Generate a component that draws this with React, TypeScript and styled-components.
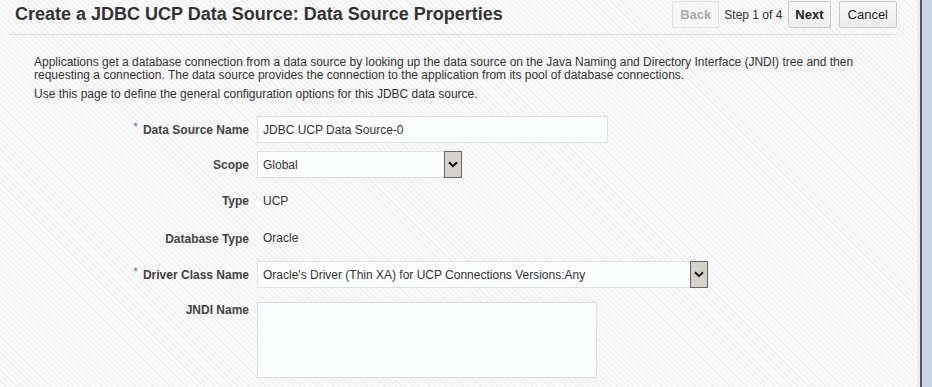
import styled, { createGlobalStyle } from 'styled-components';

const GlobalStyle = createGlobalStyle`
  html, body {
    margin: 0;
    padding: 0;
    background: #c9d5e3;
  }
  body {
    font-family: 'Liberation Sans', Arial, sans-serif;
  }
`;

function Chevron() {
  return (
    <svg width="10" height="7" viewBox="0 0 10 7">
      <path d="M1 1.2 L5 5.2 L9 1.2" fill="none" stroke="#111" strokeWidth="2" />
    </svg>
  );
}

function Select({ value, width }: { value: string; width: number }) {
  return (
    <S.SelectBox style={{ width }}>
      <S.SelectValue>{value}</S.SelectValue>
      <S.DropButton>
        <Chevron />
      </S.DropButton>
    </S.SelectBox>
  );
}

function Label({ text, required }: { text: string; required?: boolean }) {
  return (
    <S.Label>
      {required && <S.Required>*</S.Required>}
      {text}
    </S.Label>
  );
}

export default function App() {
  return (
    <>
      <GlobalStyle />
      <S.Page>
        <S.Main>
          <S.Header>
            <S.Title>Create a JDBC UCP Data Source: Data Source Properties</S.Title>
            <S.Actions>
              <S.Button $disabled $bold $pad={7}>
                Back
              </S.Button>
              <S.Step>Step 1 of 4</S.Step>
              <S.Button $bold $pad={6}>
                Next
              </S.Button>
              <S.Button $pad={8} $gap={8}>
                Cancel
              </S.Button>
            </S.Actions>
          </S.Header>

          <S.Intro>
            <S.Para>
              Applications get a database connection from a data source by looking up the data source on the
              Java Naming and Directory Interface (JNDI) tree and then requesting a connection. The data source
              provides the connection to the application from its pool of database connections.
            </S.Para>
            <S.Para>Use this page to define the general configuration options for this JDBC data source.</S.Para>
          </S.Intro>

          <S.Form>
            <S.Row>
              <Label text="Data Source Name" required />
              <S.TextInput defaultValue="JDBC UCP Data Source-0" />
            </S.Row>
            <S.Row>
              <Label text="Scope" />
              <Select value="Global" width={205} />
            </S.Row>
            <S.Row $h={29}>
              <Label text="Type" />
              <S.Value>UCP</S.Value>
            </S.Row>
            <S.Row $h={30}>
              <Label text="Database Type" />
              <S.Value>Oracle</S.Value>
            </S.Row>
            <S.Row>
              <Label text="Driver Class Name" required />
              <Select value="Oracle's Driver (Thin XA) for UCP Connections Versions:Any" width={451} />
            </S.Row>
            <S.Row $top $mt={6}>
              <Label text="JNDI Name" />
              <S.TextArea />
            </S.Row>
          </S.Form>
        </S.Main>
        <S.Edge />
      </S.Page>
    </>
  );
}

const S = {
  Page: styled.div`
    display: flex;
    width: 932px;
    height: 387px;
    overflow: hidden;
  `,
  Main: styled.div`
    flex: 1;
    padding: 0 20px 0 9px;
    background-color: #f8f8f8;
    background-image: repeating-linear-gradient(45deg, #efefef 0 1px, #f9f9f9 1px 4px);
    border-right: 3px solid #ececec;
  `,
  Edge: styled.div`
    width: 10px;
    border-left: 2px solid #56585a;
    background: #c9d5e3;
  `,
  Header: styled.div`
    display: flex;
    justify-content: space-between;
    align-items: flex-start;
    height: 34px;
    border-bottom: 1px solid #d9dfe5;
  `,
  Title: styled.h1`
    margin: 0;
    padding: 3px 0 0 6px;
    font-size: 18px;
    line-height: 22px;
    font-weight: bold;
    color: #333;
  `,
  Actions: styled.div`
    display: flex;
    align-items: center;
    margin-top: 1px;
  `,
  Step: styled.span`
    font-size: 12px;
    color: #333;
    margin: 0 6px 0 5px;
  `,
  Button: styled.button<{ $disabled?: boolean; $bold?: boolean; $pad: number; $gap?: number }>`
    height: 27px;
    padding: 0 ${({ $pad }) => $pad}px;
    margin-left: ${({ $gap }) => $gap ?? 0}px;
    font-family: 'Liberation Sans', Arial, sans-serif;
    font-size: 13px;
    font-weight: ${({ $bold }) => ($bold ? 'bold' : 'normal')};
    color: ${({ $disabled }) => ($disabled ? '#aaa' : '#222')};
    background: ${({ $disabled }) =>
      $disabled ? '#f7f7f7' : 'linear-gradient(#f8f8f8, #ededed)'};
    border: 1px solid ${({ $disabled }) => ($disabled ? '#e2e2e2' : '#c9c9c9')};
    border-radius: 2px;
  `,
  Intro: styled.div`
    padding: 21px 0 0 25px;
  `,
  Para: styled.p`
    margin: 0 0 6px;
    font-size: 12px;
    line-height: 13px;
    color: #333;
    max-width: 858px;
  `,
  Form: styled.div`
    display: flex;
    flex-direction: column;
    gap: 8px;
    margin-top: 15px;
  `,
  Row: styled.div<{ $h?: number; $top?: boolean; $mt?: number }>`
    display: grid;
    grid-template-columns: 240px 1fr;
    column-gap: 8px;
    align-items: ${({ $top }) => ($top ? 'start' : 'center')};
    min-height: ${({ $h }) => $h ?? 27}px;
    margin-top: ${({ $mt }) => $mt ?? 0}px;
  `,
  Label: styled.label`
    text-align: right;
    font-size: 12px;
    font-weight: bold;
    color: #444;
    line-height: 14px;
    padding-top: 1px;
  `,
  Required: styled.span`
    color: #4a7fc1;
    font-weight: normal;
    font-size: 12px;
    position: relative;
    top: -3px;
    margin-right: 5px;
  `,
  TextInput: styled.input`
    box-sizing: border-box;
    width: 351px;
    height: 27px;
    padding: 0 5px;
    border: 1px solid #dde1e6;
    background: #fcfdfe;
    font-family: 'Liberation Sans', Arial, sans-serif;
    font-size: 12px;
    color: #333;
    outline: none;
  `,
  SelectBox: styled.div`
    box-sizing: border-box;
    display: flex;
    align-items: stretch;
    height: 27px;
    border: 1px solid #dde1e6;
    border-right: none;
    background: #fcfdfe;
  `,
  SelectValue: styled.span`
    flex: 1;
    display: flex;
    align-items: center;
    padding-left: 5px;
    font-size: 12px;
    color: #333;
  `,
  DropButton: styled.span`
    box-sizing: border-box;
    width: 18px;
    margin: -1px 0;
    display: flex;
    align-items: center;
    justify-content: center;
    background: #d6d2ca;
    border: 1px solid #666;
  `,
  Value: styled.span`
    padding-left: 6px;
    font-size: 12px;
    color: #333;
  `,
  TextArea: styled.textarea`
    box-sizing: border-box;
    width: 340px;
    height: 76px;
    border: 1px solid #dde1e6;
    background: #fcfdfe;
    resize: none;
    outline: none;
  `,
};
